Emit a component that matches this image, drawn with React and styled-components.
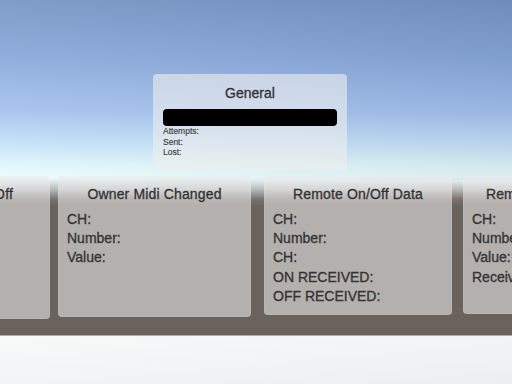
import styled, { createGlobalStyle } from "styled-components";

const GlobalStyle = createGlobalStyle`
  html, body {
    margin: 0;
    padding: 0;
    overflow: hidden;
    font-family: "Liberation Sans", Arial, sans-serif;
  }
`;

const Scene = styled.div`
  width: 512px;
  height: 384px;
  overflow: hidden;
  display: flex;
  flex-direction: column;
  align-items: flex-start;
  background:
    linear-gradient(to right, rgba(255, 255, 255, 0.07), rgba(20, 30, 60, 0.07)) 0 0 / 100% 180px no-repeat,
    linear-gradient(to right, rgba(255, 255, 255, 0.02), rgba(200, 205, 215, 0.12)) 0 336px / 100% 48px no-repeat,
    linear-gradient(
      to bottom,
      #7694c4 0px,
      #8aa9da 60px,
      #a4c2ef 112px,
      #c6e3f8 145px,
      #e0f7fb 165px,
      #ecfcfc 178px,
      #b9bdbd 189px,
      #7a736e 199px,
      #6a625c 206px,
      #6a625c 335px,
      #f8f9f9 336px,
      #f2f3f4 384px
    );
`;

const GeneralCard = styled.div`
  box-sizing: border-box;
  width: 194px;
  height: 96px;
  margin: 74px 0 0 153px;
  padding: 11px 10px 0;
  border-radius: 4px;
  background: rgba(238, 238, 238, 0.62);
  display: flex;
  flex-direction: column;
`;

const CardTitle = styled.div`
  font-size: 14px;
  line-height: 17px;
  text-align: center;
  color: #333;
  -webkit-text-stroke: 0.3px #333;
`;

const StatusBar = styled.div`
  height: 17px;
  margin-top: 7px;
  border-radius: 4px;
  background: #000;
`;

const StatLine = styled.div`
  font-size: 8.5px;
  line-height: 10.5px;
  color: #3c3c3c;
  -webkit-text-stroke: 0.15px #3c3c3c;
`;

const PanelRow = styled.div`
  display: flex;
  align-items: flex-start;
  margin: 6px 0 0 -112px;
`;

const Panel = styled.div`
  box-sizing: border-box;
  flex-shrink: 0;
  width: ${(p) => p.$w}px;
  height: ${(p) => p.$h}px;
  margin-left: ${(p) => p.$ml || 0}px;
  padding: 10px 9px 0;
  border-radius: 4px;
  background: rgba(234, 233, 232, 0.58);
  box-shadow: inset 0 0 0 1px rgba(255, 255, 255, 0.08);
  color: #333;
  -webkit-text-stroke: 0.3px #333;
  white-space: nowrap;
  overflow: hidden;
`;

const PanelTitle = styled.div`
  font-size: 14px;
  line-height: 17px;
  text-align: center;
  letter-spacing: 0.15px;
  margin-bottom: 7px;
`;

const Label = styled.div`
  font-size: 14px;
  line-height: 19.2px;
`;

const panels = [
  { title: "Owner On/Off", w: 162, h: 143, ml: 0, labels: ["CH:", "Number:", "CH:"] },
  { title: "Owner Midi Changed", w: 193, h: 141, ml: 8, labels: ["CH:", "Number:", "Value:"] },
  {
    title: "Remote On/Off Data",
    w: 188,
    h: 139,
    ml: 13,
    labels: ["CH:", "Number:", "CH:", "ON RECEIVED:", "OFF RECEIVED:"],
  },
  {
    title: "Remote Midi Changed",
    w: 188,
    h: 138,
    ml: 11,
    labels: ["CH:", "Number:", "Value:", "Received:"],
  },
];

const App = () => {
  return (
    <>
      <GlobalStyle />
      <Scene>
        <GeneralCard>
          <CardTitle>General</CardTitle>
          <StatusBar />
          <StatLine>Attempts:</StatLine>
          <StatLine>Sent:</StatLine>
          <StatLine>Lost:</StatLine>
        </GeneralCard>
        <PanelRow>
          {panels.map((p) => (
            <Panel key={p.title} $w={p.w} $h={p.h} $ml={p.ml}>
              <PanelTitle>{p.title}</PanelTitle>
              {p.labels.map((l, i) => (
                <Label key={i}>{l}</Label>
              ))}
            </Panel>
          ))}
        </PanelRow>
      </Scene>
    </>
  );
};

export default App;
